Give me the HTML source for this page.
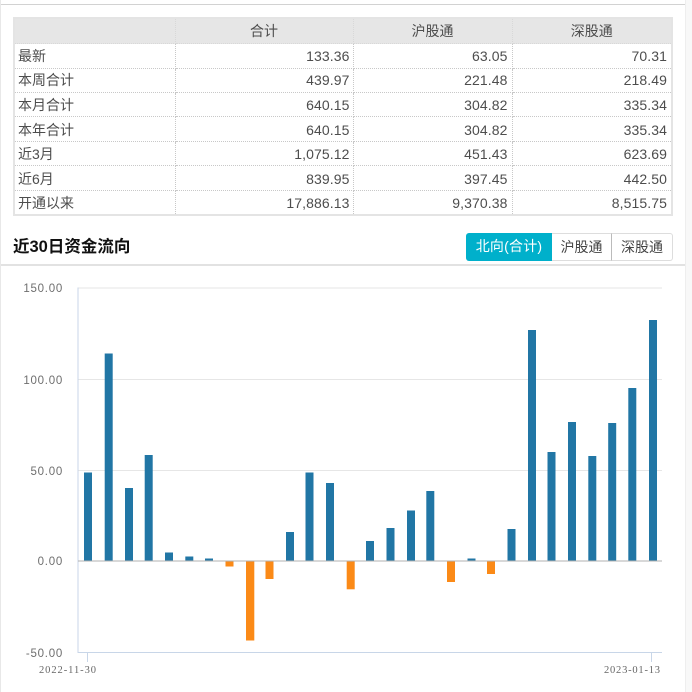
<!DOCTYPE html>
<html lang="zh">
<head>
<meta charset="utf-8">
<style>
html,body{margin:0;padding:0;background:#fff;}
body{width:692px;height:692px;position:relative;overflow:hidden;font-family:"Liberation Sans","Noto Sans CJK SC",sans-serif;color:#4d4d4d;}
#w{position:absolute;left:0;top:0;width:692px;height:692px;background:#fff;filter:blur(.3px);}
.a{position:absolute;}
table{position:absolute;left:13px;top:17px;width:660px;height:199px;border-collapse:collapse;table-layout:fixed;font-size:14px;border:2px solid #e4e4e4;}
th,td{border:1px dotted #c8c8c8;padding:0 4px;height:24px;line-height:20px;box-sizing:border-box;}
th{background:#e6e6e6;font-weight:normal;text-align:center;height:25px;border-color:#d8d8d8;}
td{text-align:right;letter-spacing:.1px;}
td:first-child{text-align:left;padding-left:3px;letter-spacing:0;}
td:nth-child(2){padding-right:3px;}
tr.d td{padding-top:1px;}
.btn{position:absolute;top:233px;height:28px;line-height:27px;text-align:center;font-size:14px;box-sizing:border-box;color:#444;}
</style>
</head>
<body>
<div id="w">
<div class="a" style="left:0;top:0;width:1px;height:692px;background:#e8e8e8"></div>
<div class="a" style="left:685px;top:0;width:7px;height:692px;background:#f8f8f8;border-left:1px solid #eee;box-sizing:border-box"></div>
<div class="a" style="left:1px;top:4px;width:684px;height:1px;background:#d2d2d2"></div>

<table>
<colgroup><col style="width:161px"><col style="width:178px"><col style="width:159px"><col style="width:160px"></colgroup>
<tr><th></th><th>合计</th><th>沪股通</th><th>深股通</th></tr>
<tr><td>最新</td><td>133.36</td><td>63.05</td><td>70.31</td></tr>
<tr><td>本周合计</td><td>439.97</td><td>221.48</td><td>218.49</td></tr>
<tr><td>本月合计</td><td>640.15</td><td>304.82</td><td>335.34</td></tr>
<tr class="d"><td>本年合计</td><td>640.15</td><td>304.82</td><td>335.34</td></tr>
<tr><td>近3月</td><td>1,075.12</td><td>451.43</td><td>623.69</td></tr>
<tr class="d"><td>近6月</td><td>839.95</td><td>397.45</td><td>442.50</td></tr>
<tr class="d"><td>开通以来</td><td>17,886.13</td><td>9,370.38</td><td>8,515.75</td></tr>
</table>

<div class="a" style="left:13px;top:237px;font-size:16.5px;font-weight:bold;color:#111;line-height:20px;white-space:nowrap">近30日资金流向</div>

<div class="btn" style="left:466px;width:86px;background:#00b0cb;color:#fff;border-radius:3px 0 0 3px;letter-spacing:.2px">北向(合计)</div>
<div class="btn" style="left:552px;width:60px;border:1px solid #ddd;border-left:0;border-right:1px solid #bbb;">沪股通</div>
<div class="btn" style="left:612px;width:61px;border:1px solid #ddd;border-left:0;border-radius:0 3px 3px 0">深股通</div>

<div class="a" style="left:1px;top:264px;width:684px;height:2px;background:#e2e2e2"></div>

<svg class="a" style="left:0;top:0" width="692" height="692" viewBox="0 0 692 692">
<g fill="none">
<path d="M78 288H662M78 379.5H662M78 470.5H662" stroke="#e6e6e6" stroke-width="1"/>
<path d="M78 287.5V652.5H662" stroke="#c8d6e8" stroke-width="1"/>
<path d="M87.5 652.5V662M651.5 652.5V662" stroke="#c8d6e8" stroke-width="1"/>
</g>
<g fill="#2176a5">
<rect x="84" y="472.5" width="8" height="88.5"/>
<rect x="104.7" y="353.5" width="8" height="207.5"/>
<rect x="125" y="488" width="8" height="73"/>
<rect x="144.7" y="455" width="8" height="106"/>
<rect x="165" y="552.5" width="8" height="8.5"/>
<rect x="185.3" y="556.5" width="8" height="4.5"/>
<rect x="205" y="558.5" width="8" height="2.5"/>
<rect x="286" y="532" width="8" height="29"/>
<rect x="305.5" y="472.5" width="8" height="88.5"/>
<rect x="326" y="483" width="8" height="78"/>
<rect x="366" y="541" width="8" height="20"/>
<rect x="386.5" y="528" width="8" height="33"/>
<rect x="407" y="510.5" width="8" height="50.5"/>
<rect x="426.3" y="491" width="8" height="70"/>
<rect x="467.5" y="558.5" width="8" height="2.5"/>
<rect x="507.5" y="529" width="8" height="32"/>
<rect x="528" y="330" width="8" height="231"/>
<rect x="547.5" y="452" width="8" height="109"/>
<rect x="568" y="422" width="8" height="139"/>
<rect x="588.3" y="456" width="8" height="105"/>
<rect x="608.2" y="423" width="8" height="138"/>
<rect x="628.3" y="388" width="8" height="173"/>
<rect x="649" y="320" width="8" height="241"/>
</g>
<g fill="#fb8a17">
<rect x="225.5" y="561" width="8" height="5.5"/>
<rect x="246" y="561" width="8.3" height="79.5"/>
<rect x="265.5" y="561" width="8" height="18"/>
<rect x="346.7" y="561" width="8" height="28.3"/>
<rect x="447" y="561" width="8" height="21"/>
<rect x="487" y="561" width="8" height="13"/>
</g>
<path d="M78 561H662" stroke="#b0b0b0" stroke-width="1"/>
<g font-family="'Liberation Sans',sans-serif" font-size="11.5" fill="#6e6e6e" text-anchor="end" letter-spacing=".75">
<text x="63" y="292">150.00</text>
<text x="63" y="384">100.00</text>
<text x="63" y="475">50.00</text>
<text x="63" y="565">0.00</text>
<text x="63" y="657">-50.00</text>
</g>
<g font-family="'Liberation Serif',serif" font-size="10.5" fill="#666">
<text x="39" y="673" textLength="57" lengthAdjust="spacing">2022-11-30</text>
<text x="604" y="673" textLength="56" lengthAdjust="spacing">2023-01-13</text>
</g>
</svg>
</div>
</body>
</html>
